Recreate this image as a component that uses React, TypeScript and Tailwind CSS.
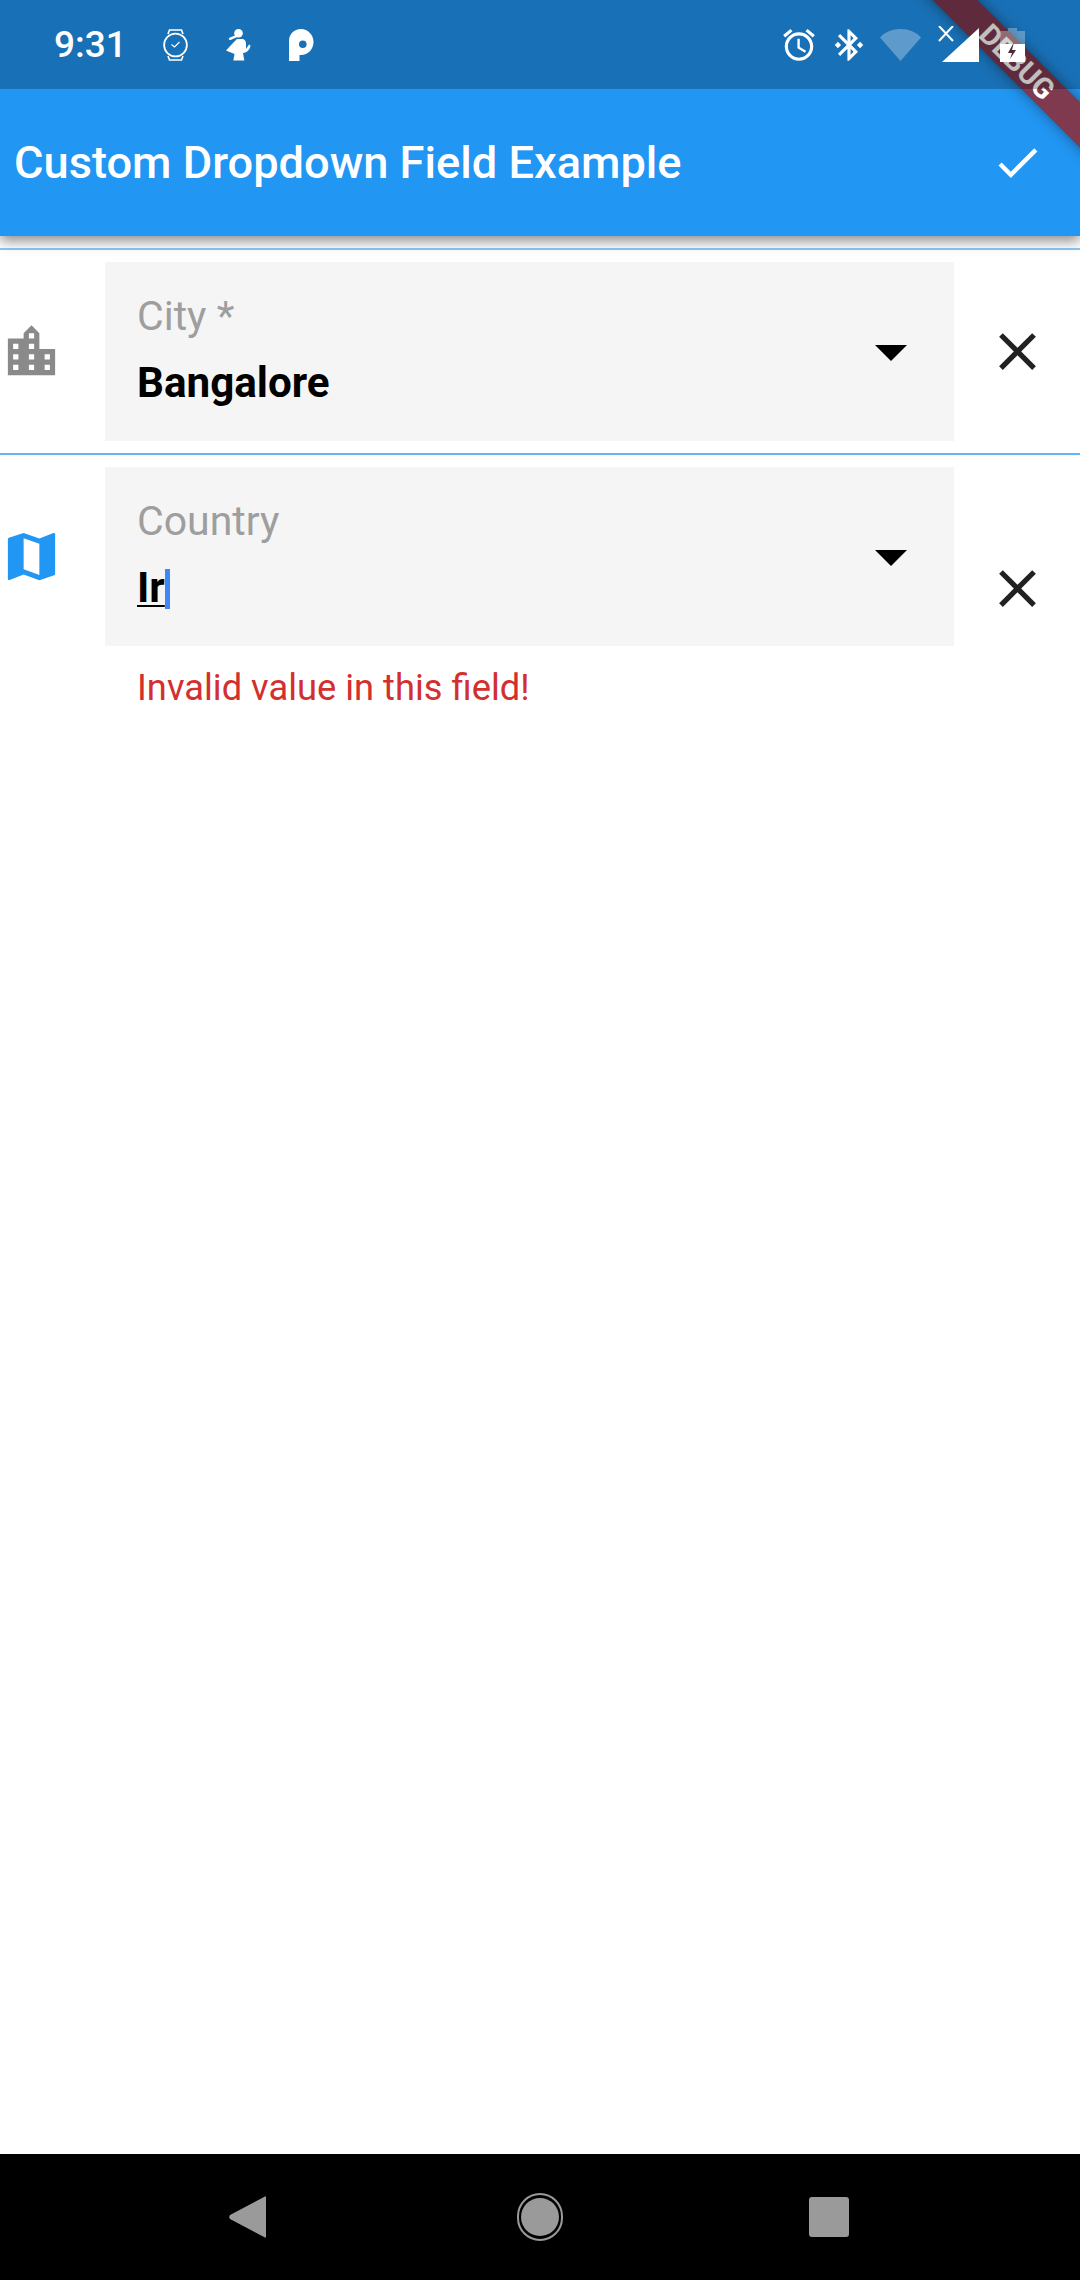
const closePath = 'M19 6.41L17.59 5 12 10.59 6.41 5 5 6.41 10.59 12 5 17.59 6.41 19 12 13.41 17.59 19 19 17.59 13.41 12z'
const font = { fontFamily: 'Roboto, sans-serif' }

function Icon({ d, className }: { d: string; className: string }) {
  return (
    <svg viewBox="0 0 24 24" className={className} fill="currentColor">
      <path d={d} />
    </svg>
  )
}

function StatusBar() {
  return (
    <div className="relative z-30 flex h-[89px] items-center bg-black/25 text-white">
      <span className="ml-[54px] w-[67px] text-[37px] leading-[40px] font-medium">9:31</span>
      <svg viewBox="0 0 25 32" className="ml-[42px] h-[32px] w-[25px]" fill="none" stroke="currentColor">
        <circle cx="12.5" cy="16" r="11.4" strokeWidth="1.8" />
        <path d="M5 5 6.5 1h12L20 5M5 27 6.5 31h12l1.500-4" strokeWidth="1.600" />
        <path d="m8.500 15.500 3 2.500 5-5" strokeWidth="1.100" />
      </svg>
      <svg viewBox="0 0 26 32" className="ml-[37px] h-[32px] w-[26px]" fill="currentColor">
        <circle cx="13.500" cy="4.300" r="4.300" />
        <path d="M5 9.800 12.500 6.700" stroke="currentColor" strokeWidth="2.400" strokeLinecap="round" />
        <path d="M8 14 12 10H18Q21 11 21 15V20L24 15.500 25.500 16.500Q25 21 20.500 23.500L18 24 19.300 31.500H8.300L9.500 25 1 21.500z" />
      </svg>
      <svg viewBox="0 0 25 32" className="ml-[38px] h-[32px] w-[25px]" fill="currentColor">
        <path
          fillRule="evenodd"
          d="M0 32V12C0 5 5 0 12 0S24.500 6 24.500 13 19 26 12 26H10.500V32zM10 15.300a3.800 3.800 0 1 0 7.600 0 3.800 3.800 0 1 0-7.600 0z"
        />
      </svg>
      <div className="flex-1" />
      <Icon
        d="M22 5.720l-4.600-3.860-1.290 1.530 4.600 3.860L22 5.720zM7.880 3.390L6.600 1.860 2 5.710l1.290 1.530 4.590-3.850zM12.500 8H11v6l4.750 2.850.75-1.230-4-2.370V8zM12 4c-4.970 0-9 4.030-9 9s4.020 9 9 9c4.970 0 9-4.030 9-9s-4.030-9-9-9zm0 16c-3.870 0-7-3.130-7-7s3.130-7 7-7 7 3.130 7 7-3.130 7-7 7z"
        className="h-[38px] w-[38px]"
      />
      <Icon
        d="M7 12l-2-2-2 2 2 2 2-2zm10.710-4.290L12 2h-1v7.590L6.410 5 5 6.410 10.590 12 5 17.590 6.410 19 11 14.410V22h1l5.710-5.710-4.300-4.290 4.300-4.290zM13 5.830l1.880 1.880L13 9.590V5.830zm1.880 10.460L13 18.170v-3.760l1.880 1.880zM19 10l-2 2 2 2 2-2-2-2z"
        className="ml-[12px] h-[38px] w-[38px]"
      />
      <svg viewBox="0 0 41 32" className="ml-[12px] h-[32px] w-[41px]" fill="currentColor" opacity="0.3">
        <path d="M0 8.500C5 3 12 0 20.500 0S36 3 41 8.500L20.500 32z" />
      </svg>
      <svg viewBox="0 0 43 36" className="ml-[17px] mb-[2px] h-[36px] w-[43px]" fill="currentColor">
        <path d="M4 36 41 2v34z" />
        <path d="M1 0l14 15M15 0 1 15" stroke="currentColor" strokeWidth="2" />
      </svg>
      <svg viewBox="0 0 25 34" className="ml-[19px] mr-[55px] h-[34px] w-[25px]" fill="currentColor">
        <path d="M8 0h9v3h8v13H0V3h8z" opacity="0.3" />
        <path d="M0 16h25v18H0z" />
        <path d="m14 14-6 11h4l-2 6 6-9h-4z" fill="#4a2a3a" />
      </svg>
    </div>
  )
}

function FieldRow({
  icon,
  label,
  children,
  error
}: {
  icon: React.ReactNode
  label: string
  children: React.ReactNode
  error?: string
}) {
  return (
    <div className="flex items-center py-[12px]">
      <div className="self-start">
        <div className="mt-[58px] h-[63px] w-[63px]">{icon}</div>
      </div>
      <div className="ml-[42px] w-[849px]">
        <div className="flex h-[179px] justify-between bg-[#f5f5f5] pl-[32px]">
          <div>
            <div className="mt-[30px] text-[41px] leading-[48px] text-[#9e9e9e]">{label}</div>
            <div className="mt-[18px] text-[42.2px] leading-[50px] font-bold text-black">{children}</div>
          </div>
          <svg viewBox="7 10 10 5" className="mt-[83px] mr-[47px] h-[16px] w-[32px]" fill="black">
            <path d="M7 10l5 5 5-5z" />
          </svg>
        </div>
        {error && <div className="mt-[20px] ml-[32px] text-[36.3px] leading-[44px] text-[#d32f2f]">{error}</div>}
      </div>
      <div className="flex w-[126px] justify-center">
        <Icon d={closePath} className="h-[63px] w-[63px] text-[#212121]" />
      </div>
    </div>
  )
}

export default function App() {
  return (
    <div className="relative flex h-[2280px] w-[1080px] flex-col overflow-hidden bg-white" style={font}>
      <div className="relative z-10 bg-[#2196f3] shadow-[0_5px_12px_rgba(0,0,0,0.45)]">
        <StatusBar />
        <div className="flex h-[147px] items-center justify-between pl-[14px] text-white">
          <h1 className="text-[45.2px] leading-[50px] font-medium">Custom Dropdown Field Example</h1>
          <Icon
            d="M9 16.170L4.830 12l-1.420 1.410L9 19 21 7l-1.410-1.410z"
            className="mr-[36px] h-[53px] w-[53px]"
          />
        </div>
        <div className="absolute top-[46px] left-[867px] z-20 flex h-[32px] w-[300px] rotate-45 items-center justify-center bg-[#7f3a50] text-[29px] leading-none font-bold text-white shadow-[0_0_14px_rgba(0,0,0,0.4)]">
          DEBUG
        </div>
      </div>

      <div className="mt-[12px] h-[2px] bg-[#8ec6f4]" />
      <FieldRow
        label="City *"
        icon={
          <Icon
            d="M15 11V5l-3-3-3 3v2H3v14h18V11h-6zm-8 8H5v-2h2v2zm0-4H5v-2h2v2zm0-4H5V9h2v2zm6 8h-2v-2h2v2zm0-4h-2v-2h2v2zm0-4h-2V9h2v2zm0-4h-2V5h2v2zm6 12h-2v-2h2v2zm0-4h-2v-2h2v2z"
            className="h-[63px] w-[63px] text-[#8a8a8a]"
          />
        }
      >
        Bangalore
      </FieldRow>
      <div className="h-[2px] bg-[#64b5f6]" />
      <FieldRow
        label="Country"
        error="Invalid value in this field!"
        icon={
          <Icon
            d="M20.500 3l-.160.030L15 5.100 9 3 3.360 4.900c-.210.070-.360.250-.360.480V20.500c0 .280.220.500.500.500l.160-.030L9 18.900l6 2.100 5.640-1.900c.210-.070.360-.250.360-.480V3.500c0-.280-.220-.500-.500-.500zM15 19l-6-2.110V5l6 2.110V19z"
            className="h-[63px] w-[63px] text-[#2196f3]"
          />
        }
      >
        <span className="inline-flex items-stretch">
          <span className="underline decoration-[2px] underline-offset-[3px]">Ir</span>
          <span className="h-[40px] w-[5px] translate-y-[6px] bg-[#4285f4]" />
        </span>
      </FieldRow>

      <div className="flex-1" />
      <div className="flex h-[126px] items-center bg-black pl-[229px]">
        <svg viewBox="0 0 37 42" className="h-[42px] w-[37px]" fill="#9a9a9a">
          <path d="M36 0.500c.6-.4 1 0 1 1v39c0 1-.4 1.400-1 1L1 23c-1-.8-1-3 0-4z" />
        </svg>
        <div className="ml-[251px] flex h-[48px] w-[46px] items-center justify-center rounded-full border-[2px] border-[#9a9a9a]">
          <div className="h-[38px] w-[38px] rounded-full bg-[#9a9a9a]" />
        </div>
        <div className="ml-[246px] h-[40px] w-[40px] rounded-[3px] bg-[#9a9a9a]" />
      </div>
    </div>
  )
}
